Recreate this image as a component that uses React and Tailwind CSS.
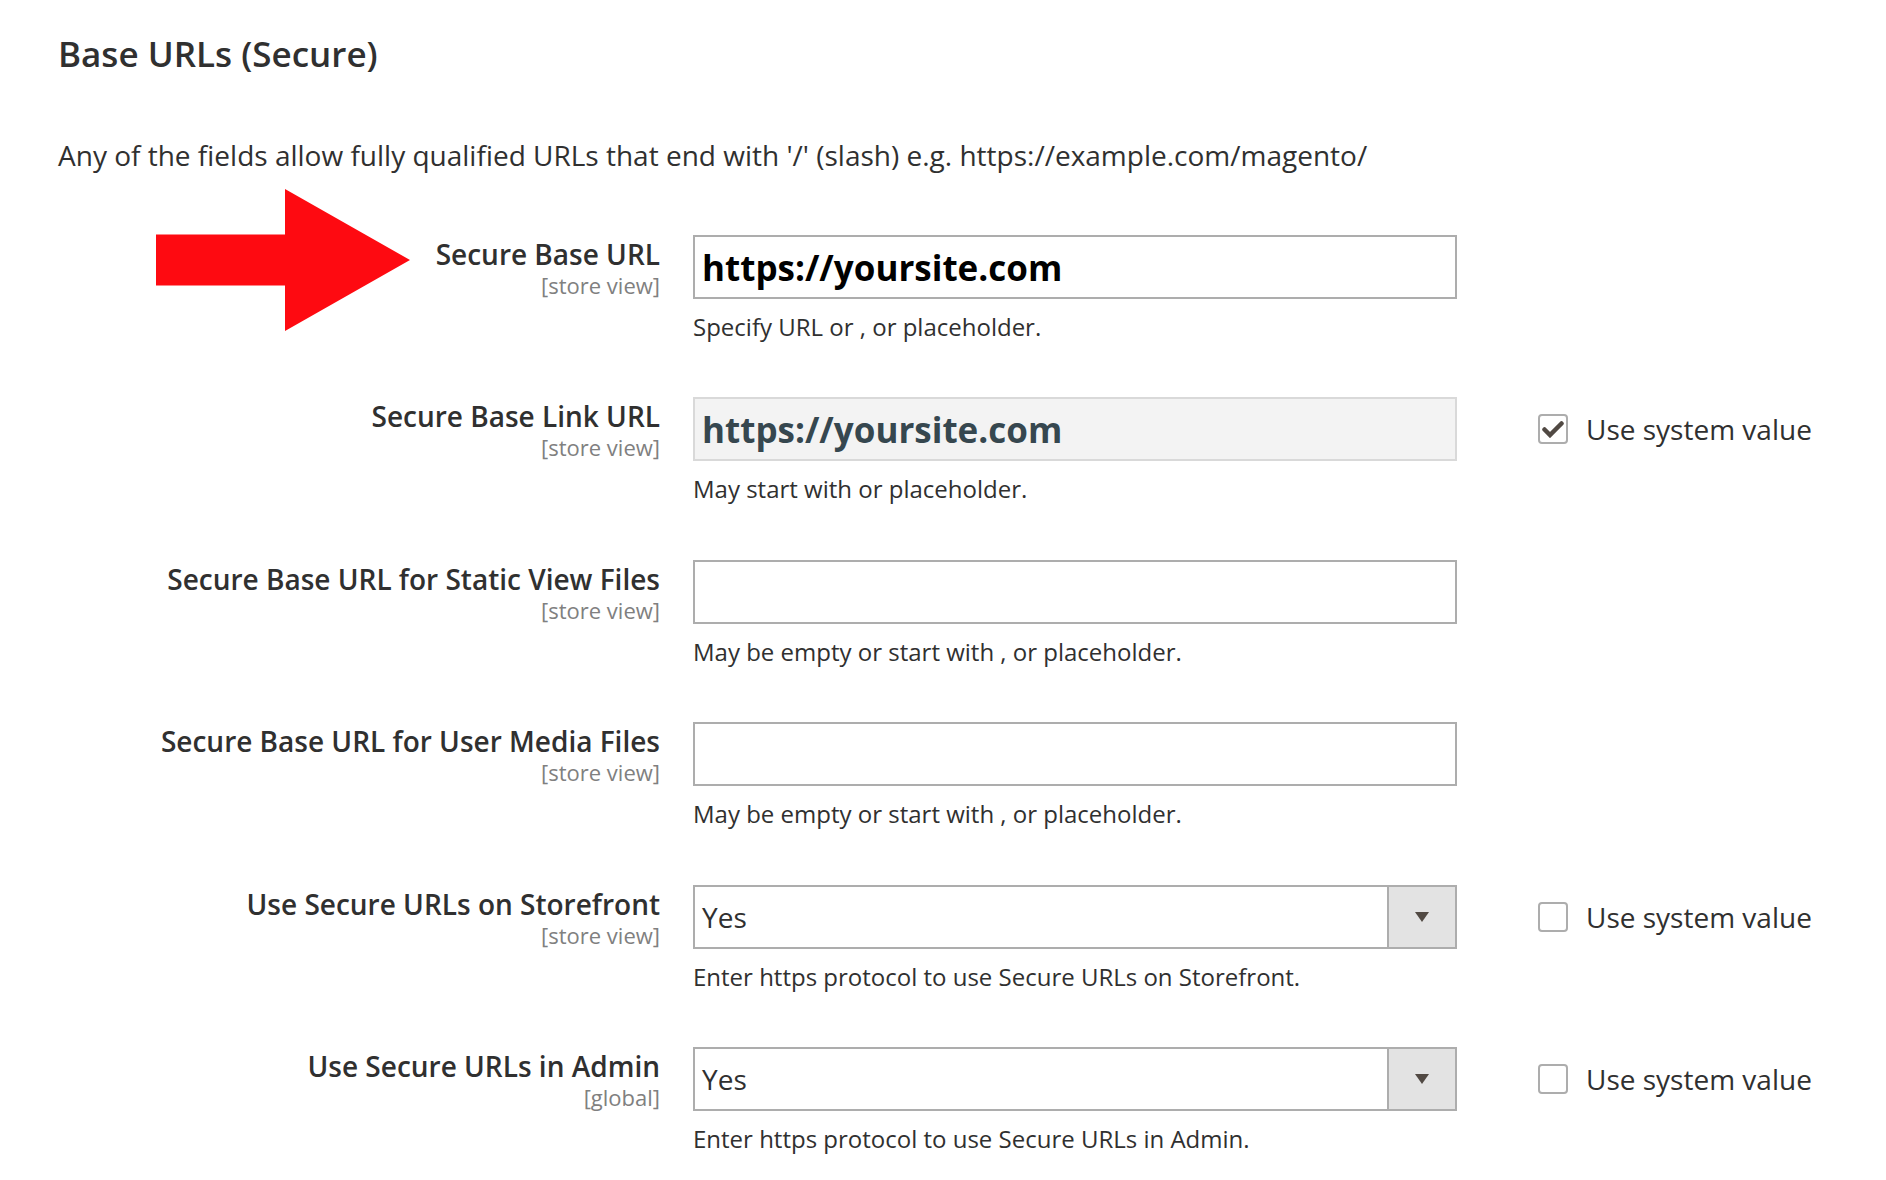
import React from "react";

const font = { fontFamily: '"Open Sans", "Noto Sans", sans-serif' };

function Label({ title, scope }) {
  return (
    <div className="w-[602px] shrink-0 text-right pt-[2px]">
      <div className="text-[28px] leading-[34px] font-semibold text-[#303030]">{title}</div>
      <div className="text-[22px] leading-[28px] text-[#808080]">{scope}</div>
    </div>
  );
}

function Checkbox({ checked }) {
  return (
    <div className="flex items-center gap-[18px] h-[64px] ml-[81px]">
      <div className="w-[30px] h-[30px] rounded-[4px] border-2 border-[#adadad] bg-white flex items-center justify-center">
        {checked && (
          <svg width="22" height="18" viewBox="0 0 22 18">
            <path d="M2.5 9.5 L8 15 L19.5 3.5" fill="none" stroke="#514943" strokeWidth="4.5" strokeLinecap="round" />
          </svg>
        )}
      </div>
      <span className="text-[28px] text-[#303030] leading-[34px]">Use system value</span>
    </div>
  );
}

function Row({ title, scope, children, help, check }) {
  return (
    <div className="flex items-start h-[162.4px]">
      <Label title={title} scope={scope} />
      <div className="w-[764px] shrink-0 ml-[33px]">
        {children}
        <div className="mt-[13px] text-[24px] leading-[30px] text-[#303030]">{help}</div>
      </div>
      {check !== undefined && <Checkbox checked={check} />}
    </div>
  );
}

function TextInput({ value, disabled }) {
  return (
    <div
      className={
        "h-[64px] flex items-center px-[7px] border-2 " +
        (disabled ? "bg-[#f3f3f3] border-[#d9d9d9] text-[#36474f]" : "bg-white border-[#adadad] text-black")
      }
    >
      <span className="text-[35px] font-bold leading-none">{value}</span>
    </div>
  );
}

function Select({ value }) {
  return (
    <div className="h-[64px] flex border-2 border-[#adadad] bg-white">
      <div className="flex-1 flex items-center px-[7px] text-[28px] text-[#303030]">{value}</div>
      <div className="w-[68px] bg-[#e3e3e3] border-l-2 border-[#adadad] flex items-center justify-center">
        <svg width="14" height="10" viewBox="0 0 14 10">
          <polygon points="0,0 14,0 7,10" fill="#514943" />
        </svg>
      </div>
    </div>
  );
}

export default function App() {
  return (
    <div className="relative w-[1886px] h-[1180px] bg-white overflow-hidden" style={font}>
      <svg className="absolute left-[156px] top-[189px]" width="254" height="142" viewBox="0 0 254 142">
        <polygon points="0,45.5 129,45.5 129,0 254,71 129,142 129,96.5 0,96.5" fill="#fe0a11" />
      </svg>
      <div className="pl-[58px] pt-[33px]">
        <h2 className="text-[35px] leading-[42px] font-semibold text-[#303030]">Base URLs (Secure)</h2>
        <p className="mt-[62px] text-[28px] leading-[36px] text-[#303030]">
          Any of the fields allow fully qualified URLs that end with '/' (slash) e.g. https://example.com/magento/
        </p>
        <div className="mt-[62px]">
          <Row title="Secure Base URL" scope="[store view]" help="Specify URL or , or placeholder.">
            <TextInput value="https://yoursite.com" />
          </Row>
          <Row title="Secure Base Link URL" scope="[store view]" help="May start with or placeholder." check={true}>
            <TextInput value="https://yoursite.com" disabled />
          </Row>
          <Row title="Secure Base URL for Static View Files" scope="[store view]" help="May be empty or start with , or placeholder.">
            <TextInput value="" />
          </Row>
          <Row title="Secure Base URL for User Media Files" scope="[store view]" help="May be empty or start with , or placeholder.">
            <TextInput value="" />
          </Row>
          <Row title="Use Secure URLs on Storefront" scope="[store view]" help="Enter https protocol to use Secure URLs on Storefront." check={false}>
            <Select value="Yes" />
          </Row>
          <Row title="Use Secure URLs in Admin" scope="[global]" help="Enter https protocol to use Secure URLs in Admin." check={false}>
            <Select value="Yes" />
          </Row>
        </div>
      </div>
    </div>
  );
}
